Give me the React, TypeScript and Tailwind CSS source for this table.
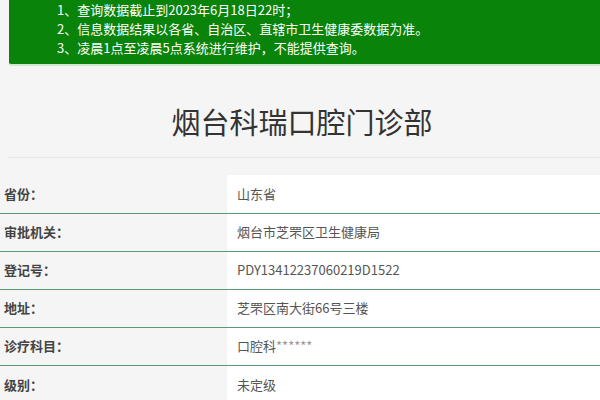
import React from 'react';

interface IInfoRow {
  label: string;
  value: string;
  stars?: boolean;
}

const notices: string[] = [
  '1、查询数据截止到2023年6月18日22时；',
  '2、信息数据结果以各省、自治区、直辖市卫生健康委数据为准。',
  '3、凌晨1点至凌晨5点系统进行维护，不能提供查询。',
];

const rows: IInfoRow[] = [
  { label: '省份：', value: '山东省' },
  { label: '审批机关：', value: '烟台市芝罘区卫生健康局' },
  { label: '登记号：', value: 'PDY13412237060219D1522' },
  { label: '地址：', value: '芝罘区南大街66号三楼' },
  { label: '诊疗科目：', value: '口腔科', stars: true },
  { label: '级别：', value: '未定级' },
];

const font = {
  fontFamily: '"Noto Sans CJK SC", "Liberation Sans", sans-serif',
};

export default function App(): JSX.Element {
  return (
    <div
      className="w-[600px] h-[400px] overflow-hidden bg-[#f5f5f5]"
      style={font}
    >
      <div className="ml-[9px] h-[66px] bg-[#098309] rounded-bl-[3px] border-b-2 border-[#cfe6cf] pl-[48px] text-white text-[13px] leading-[19px]">
        {notices.map((line) => (
          <div key={line}>{line}</div>
        ))}
      </div>

      <div className="ml-[7px] h-[92px] flex items-center justify-center border-b border-[#e8e8e8]">
        <h1 className="text-[29px] font-normal text-[#333] mr-[3px] mt-[20px]">
          烟台科瑞口腔门诊部
        </h1>
      </div>

      <table className="w-full mt-[17px] border-collapse">
        <tbody>
          {rows.map((item, index) => (
            <tr
              key={item.label}
              className={
                index === rows.length - 1
                  ? 'h-[38px]'
                  : 'h-[38px] border-b border-[#5d977a]'
              }
            >
              <td className="w-[227px] pl-[4px] text-[13px] font-bold text-[#444]">
                {item.label}
              </td>
              <td className="bg-white pl-[10px] text-[13px] text-[#555]">
                {item.value}
                {item.stars && <span className="text-[#999]">******</span>}
              </td>
            </tr>
          ))}
        </tbody>
      </table>
    </div>
  );
}
